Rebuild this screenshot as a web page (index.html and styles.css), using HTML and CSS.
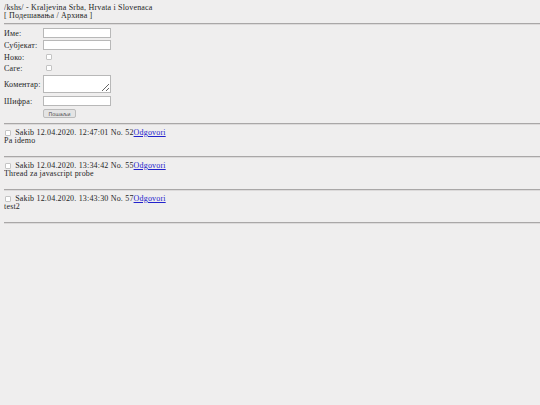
FILE: index.html
```html
<!DOCTYPE html>
<html lang="sr">
<head>
    <meta charset="UTF-8">
    <title>/kshs/ - Kraljevina Srba, Hrvata i Slovenaca</title>
    <link rel="stylesheet" href="styles.css">
</head>
<body>
    <div class="board-title">
        /kshs/ - Kraljevina Srba, Hrvata i Slovenaca
        <div class="board-nav">[ <a href="#settings">Подешавања</a> / <a href="#archive">Архива</a> ]</div>
    </div>
    <hr>

    <form class="post-form">
        <table>
            <tr>
                <td class="label">Име:</td>
                <td><input type="text" class="field"></td>
            </tr>
            <tr>
                <td class="label">Субјекат:</td>
                <td><input type="text" class="field"></td>
            </tr>
            <tr class="check-row">
                <td class="label">Ноко:</td>
                <td><input type="checkbox" class="check"></td>
            </tr>
            <tr class="check-row">
                <td class="label">Саге:</td>
                <td><input type="checkbox" class="check"></td>
            </tr>
            <tr class="comment-row">
                <td class="label">Коментар:</td>
                <td><textarea class="field comment"></textarea></td>
            </tr>
            <tr>
                <td class="label">Шифра:</td>
                <td><input type="password" class="field"></td>
            </tr>
            <tr>
                <td></td>
                <td><button type="button" class="send">Пошаљи</button></td>
            </tr>
        </table>
    </form>
    <hr>

    <div class="post">
        <div class="post-head"><input type="checkbox" class="check"> Sakib 12.04.2020. 12:47:01 No. 52<a href="#52">Odgovori</a></div>
        <div class="post-body">Pa idemo</div>
    </div>
    <hr>

    <div class="post">
        <div class="post-head"><input type="checkbox" class="check"> Sakib 12.04.2020. 13:34:42 No. 55<a href="#55">Odgovori</a></div>
        <div class="post-body">Thread za javascript probe</div>
    </div>
    <hr>

    <div class="post">
        <div class="post-head"><input type="checkbox" class="check"> Sakib 12.04.2020. 13:43:30 No. 57<a href="#57">Odgovori</a></div>
        <div class="post-body">test2</div>
    </div>
    <hr>
</body>
</html>
```

FILE: styles.css
```css
body {
    background: #efeeee;
    color: #262626;
    font-family: "Liberation Serif", "DejaVu Serif", serif;
    font-size: 8px;
    letter-spacing: 0.18px;
    line-height: 8px;
    margin: 4px 0 0 4px;
}

a {
    color: #2222cc;
}

.board-nav a {
    color: #262626;
    text-decoration: none;
}

hr {
    border: none;
    border-top: 1px solid #a9a7a7;
    border-bottom: 1px solid #dcdada;
    margin: 4px 0 2px -1px;
}

.board-title + hr {
    margin-top: 3px;
}

.post-form {
    margin-bottom: 4px;
}

.post-form table {
    border-collapse: collapse;
}

.post-form td {
    padding: 1px 0;
    vertical-align: middle;
}

.post-form .label {
    padding: 2px 1px 0 0;
    width: 38px;
}

.check-row td {
    height: 9px;
}

.comment-row td {
    padding: 2px 0;
}

.field {
    box-sizing: border-box;
    width: 68px;
    height: 10px;
    margin: 0;
    padding: 0 2px;
    font-size: 7px;
    border: 1px solid #b8b8b8;
    background: #ffffff;
    display: block;
}

.comment {
    height: 18px;
    resize: both;
}

.check {
    appearance: none;
    box-sizing: border-box;
    width: 6px;
    height: 6px;
    margin: 0 0 0 3px;
    border: 1px solid #c4c4c4;
    border-radius: 1px;
    background: #ffffff;
    vertical-align: middle;
}

.send {
    font-family: "DejaVu Sans", sans-serif;
    font-size: 5px;
    letter-spacing: 0;
    height: 9px;
    width: 33px;
    padding: 0;
    margin-top: 1px;
    border: 1px solid #bcbcbc;
    border-radius: 2px;
    background: #e4e4e4;
    color: #444444;
}

.post {
    padding: 2px 0 7px;
}

.post-head .check {
    margin: 0 2px 0 1px;
}
```
